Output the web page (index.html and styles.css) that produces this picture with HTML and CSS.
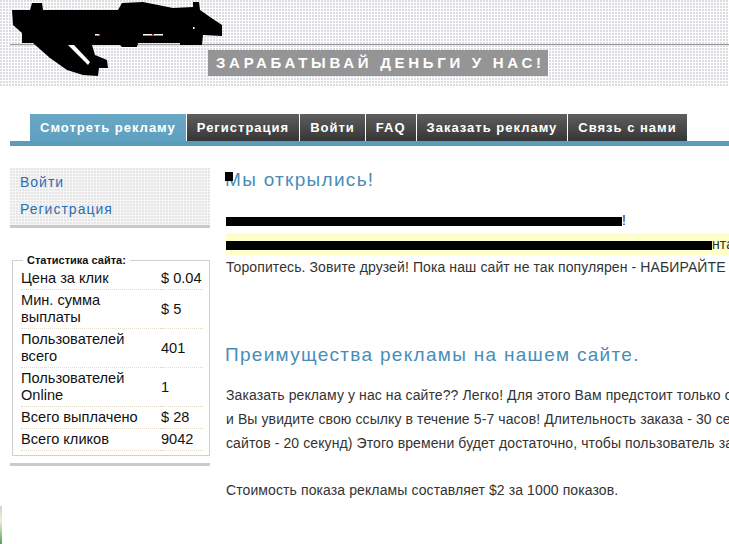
FILE: index.html
```html
<!DOCTYPE html>
<html lang="ru">
<head>
<meta charset="utf-8">
<title>Зарабатывай деньги у нас!</title>
<link rel="stylesheet" href="styles.css">
</head>
<body>
<div class="page">
  <header class="header">
    <svg class="logo" width="230" height="80" viewBox="0 0 230 80" aria-hidden="true">
      <polygon fill="#000" points="12,10 30,10 32,3 42,3 43,10 118,10 122,3 143,2 173,8 193,7 193,2 199,2 200,10 210,17 222,25 222,36 203,35 202,45 180,45 180,43 138,43 137,47 122,47 120,45 92,45 95,55 107,60 108,68 99,68 98,76 83,75 67,70 50,58 33,43 22,43 22,33 13,25"/>
      <polygon fill="#fff" points="68,45 74,45 90,62 88,65"/>
      <rect x="95" y="34" width="5" height="1.5" fill="#fff"/>
      <rect x="99" y="34" width="1.5" height="1.5" fill="#c00"/>
      <rect x="143" y="34" width="20" height="1.5" fill="#fff"/>
      <rect x="152" y="34" width="2" height="1.5" fill="#c00"/>
      <rect x="193" y="27" width="1.5" height="2" fill="#fff"/>
    </svg>
    <div class="header-rule"></div>
    <div class="banner">ЗАРАБАТЫВАЙ ДЕНЬГИ У НАС!</div>
  </header>

  <nav class="nav">
    <ul class="tabs">
      <li class="tab tab-active">Смотреть рекламу</li>
      <li class="tab">Регистрация</li>
      <li class="tab">Войти</li>
      <li class="tab">FAQ</li>
      <li class="tab">Заказать рекламу</li>
      <li class="tab">Связь с нами</li>
    </ul>
    <div class="nav-line"></div>
  </nav>

  <div class="layout">
    <aside class="sidebar">
      <div class="side-links">
        <a class="side-link" href="#">Войти</a>
        <a class="side-link" href="#">Регистрация</a>
      </div>

      <fieldset class="stats">
        <legend class="stats-title">Статистика сайта:</legend>
        <table class="stats-table">
          <tr><td class="st-label">Цена за клик</td><td class="st-value">$ 0.04</td></tr>
          <tr><td class="st-label">Мин. сумма выплаты</td><td class="st-value">$ 5</td></tr>
          <tr><td class="st-label">Пользователей всего</td><td class="st-value">401</td></tr>
          <tr><td class="st-label">Пользователей Online</td><td class="st-value">1</td></tr>
          <tr><td class="st-label">Всего выплачено</td><td class="st-value">$ 28</td></tr>
          <tr><td class="st-label">Всего кликов</td><td class="st-value">9042</td></tr>
        </table>
      </fieldset>
      <div class="side-bar"></div>
    </aside>

    <main class="content">
      <h1 class="title title-1">Мы открылись!</h1>
      <p class="text">
        <span class="censor censor-1"></span>!<br>
        <span class="hl"><span class="censor censor-2"></span>нтабельность проекта</span><br>
        Торопитесь. Зовите друзей! Пока наш сайт не так популярен - НАБИРАЙТЕ РЕФЕРАЛОВ!
      </p>

      <h2 class="title title-2">Преимущества рекламы на нашем сайте.</h2>
      <p class="text">
        Заказать рекламу у нас на сайте?? Легко! Для этого Вам предстоит только оплатить заказ,<br>
        и Вы увидите свою ссылку в течение 5-7 часов! Длительность заказа - 30 секунд (для<br>
        сайтов - 20 секунд) Этого времени будет достаточно, чтобы пользователь запомнил Ваш сайт.<br>
        <br>
        Стоимость показа рекламы составляет $2 за 1000 показов.
      </p>
    </main>
  </div>
  <div class="corner"></div>
</div>
</body>
</html>
```

FILE: styles.css
```css
html, body {
  margin: 0;
  padding: 0;
  background: #fff;
  overflow: hidden;
}

.page {
  width: 729px;
  height: 544px;
  position: relative;
  overflow: hidden;
  font-family: "Liberation Sans", Arial, sans-serif;
}

/* ---------- header ---------- */
.header {
  position: relative;
  height: 86px;
  box-sizing: border-box;
  padding-top: 44px;
  background-color: #fff;
  background-image: radial-gradient(circle at 1px 1px, #d9d9e0 0.7px, transparent 0.85px);
  background-size: 3px 3px;
}

.logo {
  position: absolute;
  left: 0;
  top: 0;
}

.header-rule {
  margin-left: 10px;
  height: 1px;
  background: #9a9a9a;
  border-bottom: 1px solid #e4e4e4;
}

.banner {
  display: inline-block;
  margin: 4px 0 0 208px;
  height: 26px;
  line-height: 26px;
  padding: 0 3px 0 8px;
  background: #959595;
  color: #fff;
  font-weight: bold;
  font-size: 15px;
  letter-spacing: 3.7px;
}

/* ---------- navigation ---------- */
.nav {
  margin-top: 28px;
}

.tabs {
  list-style: none;
  margin: 0 0 0 30px;
  padding: 0;
  display: flex;
  gap: 1px;
}

.tab {
  height: 27px;
  line-height: 28px;
  padding: 0 10px;
  color: #fff;
  font-weight: bold;
  font-size: 13px;
  letter-spacing: 1px;
  background-color: #333;
  background-image:
    radial-gradient(circle at 1px 1px, rgba(255,255,255,0.12) 0.6px, transparent 0.8px),
    linear-gradient(#555, #2a2a2a);
  background-size: 2px 2px, 100% 100%;
}

.tab-active {
  background-color: #5a9cc4;
  background-image:
    radial-gradient(circle at 1px 1px, rgba(150,200,190,0.35) 0.6px, transparent 0.8px),
    linear-gradient(#5fa1c6, #5598c0);
  background-size: 2px 2px, 100% 100%;
}

.nav-line {
  margin-left: 10px;
  height: 5px;
  background-color: #4f95bf;
  background-image: radial-gradient(circle at 1px 1px, rgba(120,180,180,0.5) 0.6px, transparent 0.8px);
  background-size: 2px 2px;
}

/* ---------- layout ---------- */
.layout {
  display: flex;
  margin-top: 22px;
}

.sidebar {
  width: 200px;
  margin-left: 10px;
  flex: none;
}

.side-links {
  display: flex;
  flex-direction: column;
  padding: 1px 10px 2px;
  background-color: #f6f6f6;
  background-image: radial-gradient(circle at 1px 1px, #d2d2d2 0.6px, transparent 0.8px);
  background-size: 3px 3px;
  border-bottom: 3px solid #c9c9c9;
}

.side-link {
  line-height: 27px;
  font-size: 14px;
  color: #2e6db4;
  text-decoration: none;
  letter-spacing: 1px;
}

.stats {
  margin: 26px 0 0 2px;
  padding: 2px 6px 4px 8px;
  border: 1px solid #cfcfcf;
  width: 198px;
  box-sizing: border-box;
}

.stats-title {
  margin-left: 2px;
  padding: 0 4px;
  font-weight: bold;
  font-size: 11px;
  color: #111;
}

.stats-table {
  width: 100%;
  table-layout: fixed;
  border-collapse: collapse;
  font-size: 14.6px;
  color: #111;
}

.stats-table td {
  line-height: 17px;
  padding: 2px 0 2px;
  border-bottom: 1px dotted #e2d9c4;
  vertical-align: middle;
}

.stats-table .st-label {
  width: 132px;
  padding-right: 8px;
}

.stats-table .st-value {
  white-space: nowrap;
}

.side-bar {
  margin-top: 7px;
  height: 3px;
  background: #cbcbcb;
}

/* ---------- content ---------- */
.content {
  margin-left: 15px;
  flex: none;
  width: 900px;
}

.title {
  position: relative;
  margin: 0;
  line-height: 24px;
  font-size: 19px;
  font-weight: normal;
  color: #4a8db6;
  letter-spacing: 1.3px;
}

.title-1::before {
  content: "";
  position: absolute;
  left: 0;
  top: 4px;
  width: 8px;
  height: 9px;
  background: #000;
}

.title-2 {
  margin-top: 63px;
}

.text {
  margin: 17px 0 0 1px;
  font-size: 14px;
  line-height: 23.7px;
  color: #333;
  white-space: nowrap;
  letter-spacing: 0.1px;
}

.censor {
  display: inline-block;
  height: 9px;
  background: #000;
  vertical-align: -1px;
}

.censor-1 { width: 396px; }
.censor-2 { width: 486px; }

.hl {
  background: #ffffcc;
  padding: 3px 0;
}

.corner {
  position: absolute;
  left: 0;
  bottom: 0;
  width: 2px;
  height: 38px;
  background: linear-gradient(#d8cfd8, #e8f0d8 40%, #5aa05a);
}
```
